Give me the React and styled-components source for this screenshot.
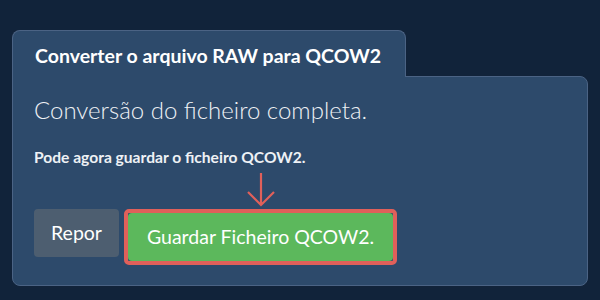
import React from "react";
import styled, { createGlobalStyle } from "styled-components";

// ========== GLOBAL ===========
const GlobalStyle = createGlobalStyle`
  html, body {
    margin: 0;
    padding: 0;
    background: #11233a;
    font-family: Lato, "Noto Sans", sans-serif;
  }
`;

// ========== STYLED COMPONENTS ===========
const Page = styled.div`
  width: 600px;
  height: 300px;
  box-sizing: border-box;
  padding: 30px 0 0 12px;
  background: #11233a;
`;

const Tab = styled.div`
  position: relative;
  z-index: 1;
  width: 394px;
  height: 47px;
  box-sizing: border-box;
  margin-bottom: -1px;
  padding: 13px 0 0 22px;
  background: #2d4a6b;
  border: 1px solid #4b6384;
  border-bottom: none;
  border-radius: 8px 8px 0 0;
`;

const TabTitle = styled.h1`
  margin: 0;
  font-size: 19.5px;
  font-weight: 700;
  line-height: 1.2;
  color: #ffffff;
`;

const Panel = styled.section`
  width: 576px;
  height: 210px;
  box-sizing: border-box;
  padding: 19px 21px 0;
  background: #2d4a6b;
  border: 1px solid #4b6384;
  border-radius: 0 8px 8px 8px;
`;

const Status = styled.h2`
  margin: 0;
  font-size: 24px;
  font-weight: 300;
  line-height: 1.2;
  color: #eef1f5;
`;

const Hint = styled.p`
  margin: 23px 0 0;
  font-size: 15.6px;
  font-weight: 700;
  line-height: 1.2;
  color: #eef1f5;
`;

const Actions = styled.div`
  display: flex;
  align-items: flex-start;
  gap: 5px;
  margin-top: 42px;
`;

const Button = styled.button`
  height: 48px;
  padding: 0 ${({ $pad }) => $pad}px;
  border: none;
  border-radius: 4px;
  background: ${({ $bg }) => $bg};
  color: #ffffff;
  font-family: Lato, "Noto Sans", sans-serif;
  font-size: 19.5px;
  font-weight: 400;
  cursor: pointer;
`;

const Highlight = styled.div`
  position: relative;
  border: 4px solid #e0605a;
  border-radius: 5px;
  display: flex;
`;

const Arrow = styled.svg`
  position: absolute;
  left: 50%;
  bottom: 100%;
  transform: translateX(-50%);
  margin-bottom: 6px;
`;

// ========== COMPONENT ===========
const App = () => {
  return (
    <>
      <GlobalStyle />
      <Page>
        <Tab>
          <TabTitle>Converter o arquivo RAW para QCOW2</TabTitle>
        </Tab>
        <Panel>
          <Status>Conversão do ficheiro completa.</Status>
          <Hint>Pode agora guardar o ficheiro QCOW2.</Hint>
          <Actions>
            <Button $bg="#4d5e70" $pad={17}>Repor</Button>
            <Highlight>
              <Arrow width="30" height="35" viewBox="0 0 30 35">
                <path
                  d="M15 1 V33 M2 20 L15 33 L28 20"
                  fill="none"
                  stroke="#e0605a"
                  strokeWidth="2.2"
                />
              </Arrow>
              <Button $bg="#5cb85c" $pad={19}>Guardar Ficheiro QCOW2.</Button>
            </Highlight>
          </Actions>
        </Panel>
      </Page>
    </>
  );
};

export default App;
